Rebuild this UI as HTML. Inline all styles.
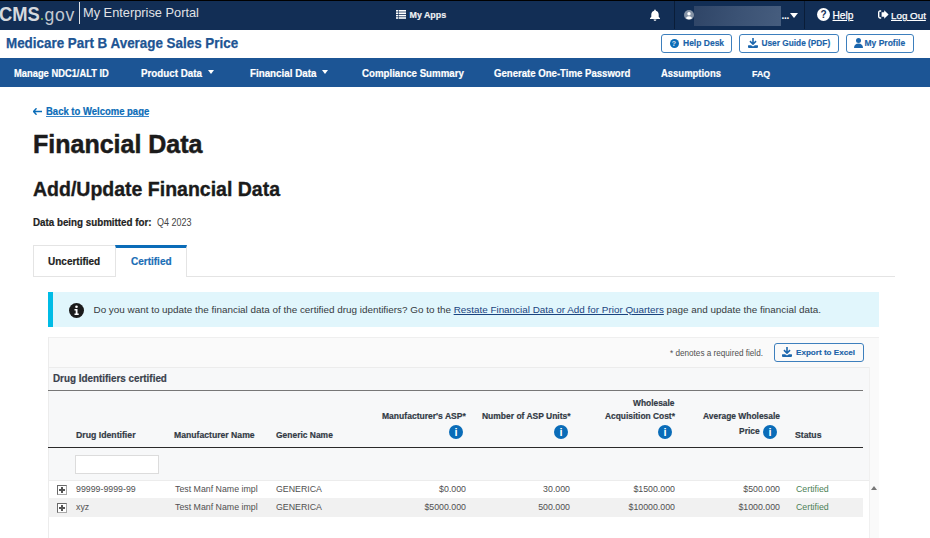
<!DOCTYPE html>
<html><head><meta charset="utf-8">
<style>
*{margin:0;padding:0;box-sizing:border-box}
html,body{width:930px;height:538px;overflow:hidden;background:#fff;font-family:"Liberation Sans",sans-serif;color:#212121}
.a{position:absolute;white-space:nowrap}
svg{display:block}
.sx{transform-origin:0 0;display:inline-block}
#top{position:absolute;left:0;top:0;width:930px;height:29.5px;background:#122e55;border-top:1px solid #000}
#band{position:absolute;left:0;top:29.5px;width:930px;height:28.5px;background:#fff}
#nav{position:absolute;left:0;top:58px;width:930px;height:29px;background:#1c5595}
.nv{color:#fff;-webkit-text-stroke:0.2px #fff;font-weight:700;font-size:9.5px;top:67.5px}
.caret{display:inline-block;width:0;height:0;border-left:3.2px solid transparent;border-right:3.2px solid transparent;border-top:3.8px solid #fff;vertical-align:middle;margin-left:8px;position:relative;top:-1px}
.caret2{top:70.4px;width:0;height:0;border-left:3.5px solid transparent;border-right:3.5px solid transparent;border-top:4.5px solid #fff}
.btn{-webkit-text-stroke:0.15px #1b62a8;position:absolute;border:1.5px solid #3d7fbd;border-radius:3px;height:19px;top:34px;color:#1b62a8;font-weight:700;font-size:8.5px;line-height:17.5px}
.th{-webkit-text-stroke:0.2px #323a45;font-weight:700;font-size:8.6px;color:#323a45}
.info{position:absolute;width:14px;height:14px;border-radius:50%;background:#0a6cb8}
.info:after{content:"i";position:absolute;left:0;top:0;width:14px;text-align:center;color:#fff;font-weight:700;font-size:11px;line-height:14px}
.td{font-size:8.8px;color:#505050}
.plus{position:absolute;width:10px;height:10px;border:1px solid;border-color:#6a6a6a #a8a8a8 #a8a8a8 #6a6a6a;left:57px;background:#fff}
.plus:before{content:"";position:absolute;left:1px;top:3px;width:6px;height:2px;background:#555}
.plus:after{content:"";position:absolute;left:3px;top:1px;width:2px;height:6px;background:#555}
</style></head><body>

<!-- TOP BAR -->
<div id="top"></div>
<div class="a" style="left:-1px;top:3px;color:#d5d9de;font-size:20.4px;font-weight:700;transform:scaleX(0.9);transform-origin:0 0">CMS</div>
<div class="a" style="left:40.5px;top:17.5px;width:2.5px;height:2.5px;border-radius:50%;background:#8cc051"></div>
<div class="a" style="left:44.5px;top:5px;color:#c3c9d1;font-size:17.6px;letter-spacing:0.7px">gov</div>
<div class="a" style="left:79px;top:2px;width:1.2px;height:22px;background:#dfe2e6"></div>
<div class="a" style="left:83px;top:5px;color:#e0e2e5;font-size:12.8px">My Enterprise Portal</div>

<div class="a" style="left:396px;top:10px;width:10px;height:9px">
 <svg width="10" height="9" viewBox="0 0 10 9"><rect x="0" y="0" width="10" height="1.6" fill="#fff"/><rect x="0" y="2.4" width="10" height="1.6" fill="#fff"/><rect x="0" y="4.8" width="10" height="1.6" fill="#fff"/><rect x="0" y="7.2" width="10" height="1.6" fill="#fff"/><rect x="2" y="0" width="0.6" height="9" fill="#122e55"/></svg>
</div>
<div class="a" style="left:409.5px;top:10px;color:#f0f2f5;-webkit-text-stroke:0.15px #f0f2f5;font-size:8.9px;font-weight:700">My Apps</div>

<svg class="a" style="left:649px;top:9px" width="12" height="12" viewBox="0 0 12 12"><path d="M6 0.5c.5 0 .8.3.8.8v.4c1.8.4 2.9 1.9 2.9 3.7v2.4l1.3 1.5v.6H1v-.6l1.3-1.5V5.4c0-1.8 1.1-3.3 2.9-3.7v-.4c0-.5.3-.8.8-.8zM4.6 10.4h2.8c0 .8-.6 1.3-1.4 1.3s-1.4-.5-1.4-1.3z" fill="#fff"/></svg>
<div class="a" style="left:674px;top:1px;width:1px;height:28px;background:#0a1d38"></div>
<svg class="a" style="left:684px;top:10px" width="10" height="10" viewBox="0 0 10 10"><circle cx="5" cy="5" r="5" fill="#8593a6"/><circle cx="5" cy="3.7" r="1.7" fill="#fff"/><path d="M1.9 8.2c.5-1.3 1.7-2 3.1-2s2.6.7 3.1 2c-.8.6-1.9 1-3.1 1s-2.3-.4-3.1-1z" fill="#fff"/></svg>
<div class="a" style="left:694px;top:6px;width:87px;height:20px;background:linear-gradient(100deg,#2f4567,#3b5274 50%,#465d7e)"></div>
<div class="a" style="left:781.5px;top:9.7px;color:#fff;font-size:10px;font-weight:700;letter-spacing:-0.3px">...</div>
<div class="a" style="left:790px;top:13px;width:0;height:0;border-left:4.5px solid transparent;border-right:4.5px solid transparent;border-top:5px solid #fff"></div>
<div class="a" style="left:804px;top:1px;width:1px;height:28px;background:#0a1d38"></div>
<svg class="a" style="left:817px;top:8px" width="13" height="13" viewBox="0 0 13 13"><circle cx="6.5" cy="6.5" r="6.5" fill="#fff"/><text x="6.5" y="10.3" text-anchor="middle" font-family="Liberation Sans" font-weight="700" font-size="10" fill="#122e55">?</text></svg>
<div class="a" style="left:832.5px;top:10px;color:#fff;-webkit-text-stroke:0.25px #fff;font-size:10.2px;text-decoration:underline">Help</div>
<svg class="a" style="left:877.5px;top:10px" width="11" height="9" viewBox="0 0 11 9"><path d="M6.2 2.3V0.3L10.6 4.5 6.2 8.7V6.7H3.6V2.3z" fill="#fff"/><path d="M3.2 1H2C1.2 1 .7 1.6.7 2.4v4.2c0 .8.5 1.4 1.3 1.4h1.2" stroke="#fff" stroke-width="1.4" fill="none"/></svg>
<div class="a" style="left:891px;top:10px;color:#fff;-webkit-text-stroke:0.25px #fff;font-size:9.8px;text-decoration:underline">Log Out</div>

<!-- BAND -->
<div id="band"></div>
<div class="a" style="left:6px;top:35px;color:#205493;-webkit-text-stroke:0.25px #205493;font-size:14.47px;transform:scaleX(0.926);transform-origin:0 0;font-weight:700">Medicare Part B Average Sales Price</div>

<div class="btn" style="left:661px;width:71px">
 <span style="position:absolute;left:7.5px;top:3.5px;width:9px;height:9px;border-radius:50%;background:#0a6cb8;color:#fff;font-size:7px;text-align:center;line-height:9px">?</span>
 <span style="position:absolute;left:21px;top:0">Help Desk</span>
</div>
<div class="btn" style="left:739px;width:100px">
 <svg style="position:absolute;left:8px;top:3px" width="10" height="10" viewBox="0 0 10 10"><path d="M4.2 0h1.6v4.3l1.7-1.7 1.1 1.1L5 7.3 1.4 3.7l1.1-1.1 1.7 1.7z" fill="#1b66ad"/><path d="M0.5 7.2h2.6L5 8.6l1.9-1.4h2.6c.3 0 .5.2.5.5v1.4c0 .5-.4.9-.9.9H0.9C.4 10 0 9.6 0 9.1V7.7c0-.3.2-.5.5-.5z" fill="#1b66ad"/></svg>
 <span style="position:absolute;left:21.5px;top:0;font-size:8.3px">User Guide (PDF)</span>
</div>
<div class="btn" style="left:846px;width:68px">
 <svg style="position:absolute;left:7px;top:3px" width="9" height="10" viewBox="0 0 9 10"><circle cx="4.5" cy="2.6" r="2.5" fill="#1b66ad"/><path d="M0 10c0-3 1.8-4.6 4.5-4.6S9 7 9 10z" fill="#1b66ad"/></svg>
 <span style="position:absolute;left:17.5px;top:0">My Profile</span>
</div>

<!-- NAV -->
<div id="nav"></div>
<div class="a nv" style="left:14px;font-size:10.11px;transform:scaleX(0.926);transform-origin:0 0">Manage NDC1/ALT ID</div>
<div class="a nv" style="left:140.5px;font-size:10.26px;transform:scaleX(0.955);transform-origin:0 0">Product Data</div>
<div class="a caret2" style="left:208.3px"></div>
<div class="a nv" style="left:249.5px;font-size:10.26px;transform:scaleX(0.955);transform-origin:0 0">Financial Data</div>
<div class="a caret2" style="left:322.2px"></div>
<div class="a nv" style="left:362px;font-size:10.48px;transform:scaleX(0.926);transform-origin:0 0">Compliance Summary</div>
<div class="a nv" style="left:494px;font-size:10.37px;transform:scaleX(0.926);transform-origin:0 0">Generate One-Time Password</div>
<div class="a nv" style="left:661px;font-size:10.23px;transform:scaleX(0.926);transform-origin:0 0">Assumptions</div>
<div class="a nv" style="left:752px;font-size:9.6px;transform:scaleX(0.92);transform-origin:0 0">FAQ</div>

<!-- BODY -->
<svg class="a" style="left:33px;top:108px" width="9" height="7" viewBox="0 0 9 7"><path d="M3.5 0.3L0.6 3.5l2.9 3.2M0.8 3.5H9" stroke="#0a6cb8" stroke-width="1.4" fill="none"/></svg>
<div class="a" style="left:46px;top:106px;color:#0a6cb8;-webkit-text-stroke:0.2px #0a6cb8;font-size:10.26px;transform:scaleX(0.926);transform-origin:0 0;font-weight:700;">Back to Welcome page</div>
<div class="a" style="left:46px;top:115.5px;width:103px;height:1px;background:#3a86c8"></div>

<div class="a" style="left:33px;top:129.5px;font-size:25px;font-weight:700;color:#1b1b1b;-webkit-text-stroke:0.5px #1b1b1b">Financial Data</div>
<div class="a" style="left:33px;top:178px;font-size:19.5px;font-weight:700;color:#1b1b1b;-webkit-text-stroke:0.35px #1b1b1b">Add/Update Financial Data</div>
<div class="a" style="left:33px;top:216.5px;-webkit-text-stroke:0.2px #222;font-size:10.37px;transform:scaleX(0.945);transform-origin:0 0;font-weight:700;color:#222">Data being submitted for:</div>
<div class="a" style="left:157px;top:216px;font-size:10.8px;color:#444;transform:scaleX(0.835);transform-origin:0 0">Q4 2023</div>

<!-- TABS -->
<div class="a" style="left:33px;top:245px;width:83px;height:32px;border:1px solid #e4e4e4;border-right:none;background:#fff"></div>
<div class="a" style="left:48px;top:255.2px;-webkit-text-stroke:0.2px #212121;font-size:10.80px;transform:scaleX(0.926);transform-origin:0 0;font-weight:700;color:#212121">Uncertified</div>
<div class="a" style="left:115px;top:245px;width:72px;height:32px;border-left:1px solid #e4e4e4;border-right:1px solid #e4e4e4;border-top:3px solid #0a6cb8;background:#fff"></div>
<div class="a" style="left:131px;top:255.2px;-webkit-text-stroke:0.2px #1a6db5;font-size:10.80px;transform:scaleX(0.926);transform-origin:0 0;font-weight:700;color:#1a6db5">Certified</div>
<div class="a" style="left:186px;top:276px;width:709px;height:1px;background:#e4e4e4"></div>

<!-- ALERT -->
<div class="a" style="left:48px;top:292px;width:831px;height:35px;background:#e1f6fc;border-left:5px solid #00bce6"></div>
<svg class="a" style="left:68.5px;top:302.5px" width="15" height="15" viewBox="0 0 15 15"><circle cx="7.5" cy="7.5" r="7.5" fill="#1b1b1b"/><circle cx="7.5" cy="3.8" r="1.3" fill="#fff"/><path d="M5.5 6h3v4.5h1.2v1.5H5.5v-1.5h1.2V7.5H5.5z" fill="#fff"/></svg>
<div class="a" style="left:93.5px;top:303.5px;font-size:9.88px;color:#353a40">Do you want to update the financial data of the certified drug identifiers? Go to the <span style="text-decoration:underline;color:#1a4480">Restate Financial Data or Add for Prior Quarters</span> page and update the financial data.</div>

<!-- CARD -->
<div class="a" style="left:48px;top:337px;width:831px;height:201px;background:#fafafa;border-top:1px solid #efefef"></div>
<div class="a" style="left:48px;top:367px;width:821px;height:113px;background:#f7f8f9;border-top:1px solid #ececec"></div>
<div class="a" style="left:869px;top:367px;width:10px;height:171px;background:#fafafa;border-left:1px solid #f0f0f0"></div>
<div class="a" style="left:48px;top:480px;width:821px;height:58px;background:#fff;border-top:1px solid #ececec"></div>
<div class="a" style="left:48px;top:337px;width:1px;height:201px;background:#ececec"></div>

<div class="a" style="left:670px;top:348.7px;font-size:8.16px;color:#505050">* denotes a required field.</div>
<div class="btn" style="left:774px;top:343px;width:90px">
 <svg style="position:absolute;left:7px;top:3px" width="10" height="10" viewBox="0 0 10 10"><path d="M4.2 0h1.6v4.3l1.7-1.7 1.1 1.1L5 7.3 1.4 3.7l1.1-1.1 1.7 1.7z" fill="#1b66ad"/><path d="M0.5 7.2h2.6L5 8.6l1.9-1.4h2.6c.3 0 .5.2.5.5v1.4c0 .5-.4.9-.9.9H0.9C.4 10 0 9.6 0 9.1V7.7c0-.3.2-.5.5-.5z" fill="#1b66ad"/></svg>
 <span style="position:absolute;left:21px;top:0;font-size:8.1px">Export to Excel</span>
</div>

<div class="a" style="left:53px;top:372px;-webkit-text-stroke:0.2px #3a414c;font-size:10.65px;transform:scaleX(0.926);transform-origin:0 0;font-weight:700;color:#3a414c">Drug Identifiers certified</div>
<div class="a" style="left:48px;top:390px;width:815px;height:1px;background:#777"></div>

<div class="a th" style="left:76px;top:429.4px;font-size:9.42px;transform:scaleX(0.926);transform-origin:0 0">Drug Identifier</div>
<div class="a th" style="left:174px;top:430px;font-size:9.34px;transform:scaleX(0.926);transform-origin:0 0">Manufacturer Name</div>
<div class="a th" style="left:276px;top:430px;font-size:9.13px;transform:scaleX(0.926);transform-origin:0 0">Generic Name</div>
<div class="a th" style="left:382px;top:411px;font-size:9.23px;transform:scaleX(0.926);transform-origin:0 0">Manufacturer's ASP*</div>
<div class="info" style="left:449px;top:425px"></div>
<div class="a th" style="left:482px;top:411px;font-size:9.16px;transform:scaleX(0.926);transform-origin:0 0">Number of ASP Units*</div>
<div class="info" style="left:554px;top:425px"></div>
<div class="a th" style="left:633px;top:398px;font-size:9.07px;transform:scaleX(0.926);transform-origin:0 0">Wholesale</div>
<div class="a th" style="left:605px;top:411px;font-size:9.07px;transform:scaleX(0.926);transform-origin:0 0">Acquisition Cost*</div>
<div class="info" style="left:658px;top:425px"></div>
<div class="a th" style="left:703px;top:411px;font-size:9.12px;transform:scaleX(0.926);transform-origin:0 0">Average Wholesale</div>
<div class="a th" style="left:739px;top:426px;font-size:9.12px;transform:scaleX(0.926);transform-origin:0 0">Price</div>
<div class="info" style="left:763px;top:425px"></div>
<div class="a th" style="left:794.5px;top:430px;font-size:9.36px;transform:scaleX(0.926);transform-origin:0 0">Status</div>
<div class="a" style="left:48px;top:446.6px;width:815px;height:1.8px;background:#2a2a2a"></div>

<div class="a" style="left:75px;top:455px;width:84px;height:19px;background:#fff;border:1px solid #dcdcdc"></div>

<!-- ROWS -->
<div class="a" style="left:48px;top:498px;width:815px;height:18.6px;background:#f1f1f1"></div>
<div class="plus" style="top:485px"></div>
<div class="plus" style="top:503px"></div>
<div class="a td" style="left:76px;top:484px">99999-9999-99</div>
<div class="a td" style="left:175px;top:484px">Test Manf Name impl</div>
<div class="a td" style="left:276px;top:484px">GENERICA</div>
<div class="a td" style="left:386px;top:484px;width:80px;text-align:right">$0.000</div>
<div class="a td" style="left:490px;top:484px;width:80px;text-align:right">30.000</div>
<div class="a td" style="left:595px;top:484px;width:80px;text-align:right">$1500.000</div>
<div class="a td" style="left:700px;top:484px;width:80px;text-align:right">$500.000</div>
<div class="a td" style="left:796px;top:484px;color:#4c7f56">Certified</div>

<div class="a td" style="left:76px;top:502px">xyz</div>
<div class="a td" style="left:175px;top:502px">Test Manf Name impl</div>
<div class="a td" style="left:276px;top:502px">GENERICA</div>
<div class="a td" style="left:386px;top:502px;width:80px;text-align:right">$5000.000</div>
<div class="a td" style="left:490px;top:502px;width:80px;text-align:right">500.000</div>
<div class="a td" style="left:595px;top:502px;width:80px;text-align:right">$10000.000</div>
<div class="a td" style="left:700px;top:502px;width:80px;text-align:right">$1000.000</div>
<div class="a td" style="left:796px;top:502px;color:#4c7f56">Certified</div>

<div class="a" style="left:870.5px;top:486px;width:0;height:0;border-left:3.5px solid transparent;border-right:3.5px solid transparent;border-bottom:4px solid #777"></div>

</body></html>
